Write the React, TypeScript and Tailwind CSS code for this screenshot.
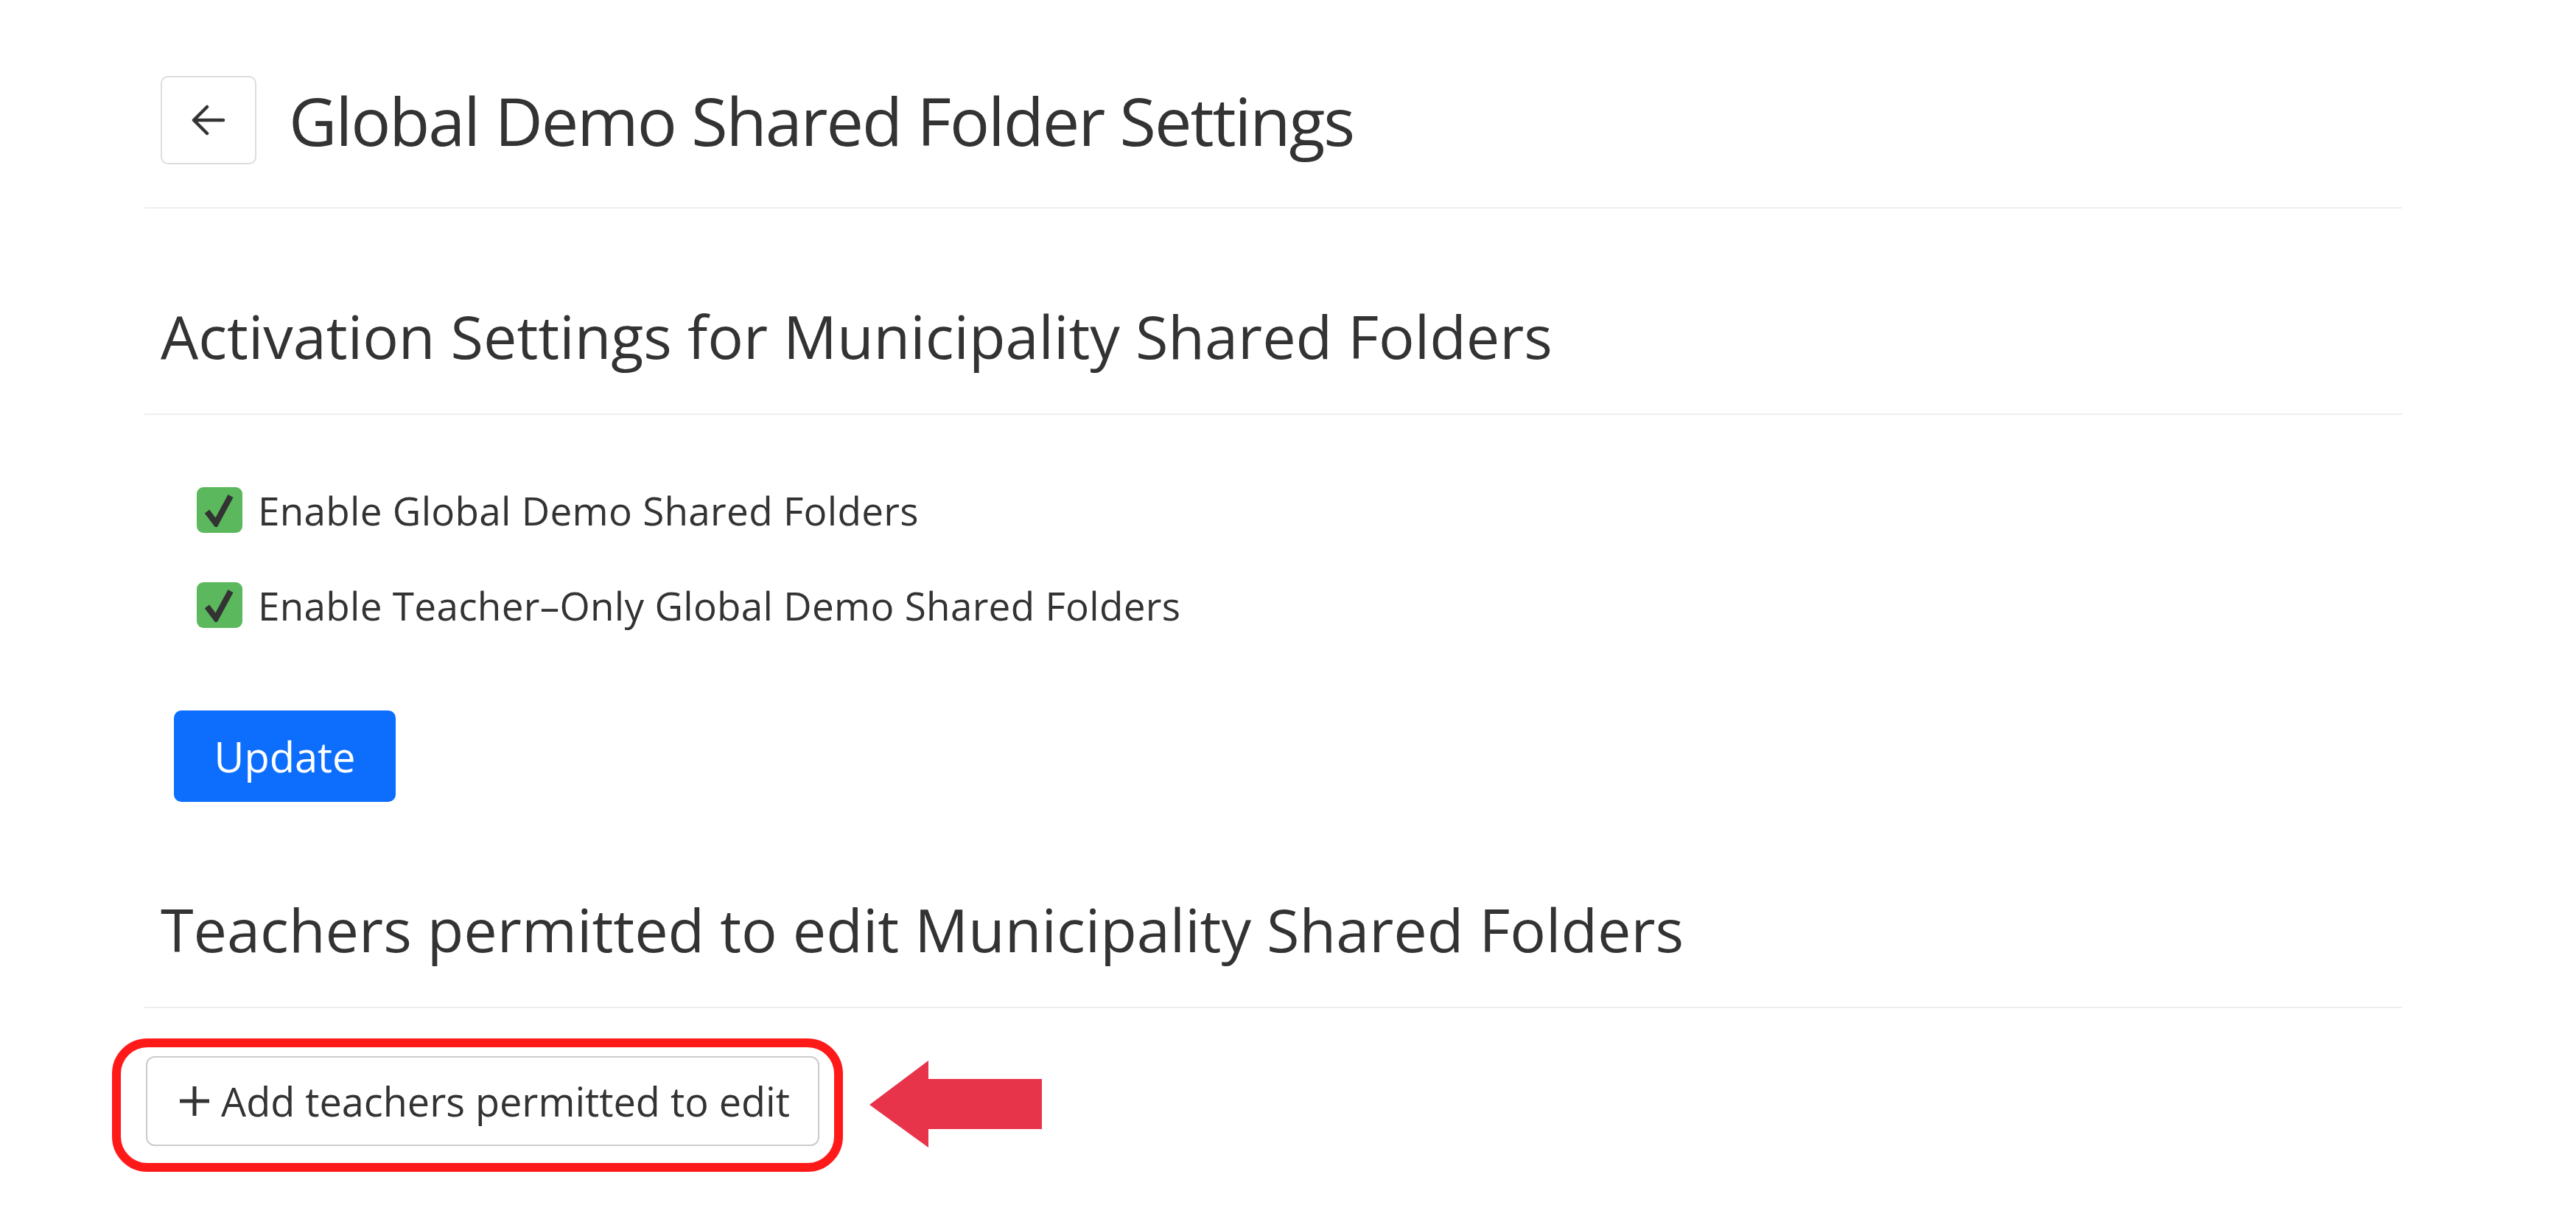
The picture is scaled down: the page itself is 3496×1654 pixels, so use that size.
const font = { fontFamily: '"Open Sans", "Noto Sans", sans-serif' };

const Check = () => (
    <span className="flex items-center justify-center w-[62px] h-[62px] rounded-[9px] bg-[#5cb85c] shrink-0">
        <svg width="40" height="46" viewBox="0 0 40 46">
            <path d="M3 25 L15 41 L35 4" fill="none" stroke="#333333" strokeWidth="8" strokeLinejoin="miter" />
        </svg>
    </span>
);

const CheckRow = ({ label }: { label: string }) => (
    <label className="flex items-center gap-[21px] h-[62px]">
        <Check />
        <span className="text-[53px] leading-none text-[#333333] tracking-[0.3px]">{label}</span>
    </label>
);

const SectionTitle = ({ children }: { children: string }) => (
    <div className="border-b-2 border-[#eeeeee] pt-[132px] pb-[65px]">
        <h2 className="pl-[22px] text-[81px] leading-none font-normal text-[#333333]">{children}</h2>
    </div>
);

export default function App() {
    return (
        <div className="min-h-screen bg-white" style={font}>
            <div className="ml-[196px] w-[3064px]">
                <div className="flex items-center gap-[44px] pt-[103px] pb-[58px] pl-[22px] border-b-2 border-[#eeeeee]">
                    <button className="flex items-center justify-center w-[130px] h-[120px] rounded-[10px] border-2 border-[#dddddd] bg-white">
                        <svg width="48" height="42" viewBox="0 0 48 42">
                            <path d="M44 21 H5 M22 3 L4 21 L22 39" fill="none" stroke="#333333" strokeWidth="4.5" strokeLinecap="round" strokeLinejoin="round" />
                        </svg>
                    </button>
                    <h1 className="text-[90px] leading-none font-normal text-[#333333] tracking-[-2px]">Global Demo Shared Folder Settings</h1>
                </div>

                <SectionTitle>Activation Settings for Municipality Shared Folders</SectionTitle>

                <div className="flex flex-col gap-[67px] pt-[98px] pl-[71px]">
                    <CheckRow label="Enable Global Demo Shared Folders" />
                    <CheckRow label="Enable Teacher–Only Global Demo Shared Folders" />
                </div>

                <div className="pt-[112px] pl-[40px]">
                    <button className="w-[301px] h-[124px] rounded-[10px] bg-[#0d6efd] text-white text-[56px] font-medium leading-none">Update</button>
                </div>

                <SectionTitle>Teachers permitted to edit Municipality Shared Folders</SectionTitle>

                <div className="flex items-start pt-[41px] -ml-[44px]">
                    <div className="pl-[34px] pr-[20px] pt-[12px] pb-[23px] border-[12px] border-[#ff1a1a] rounded-[48px]">
                        <button className="flex items-center gap-[14px] w-[914px] h-[122px] pl-[42px] rounded-[12px] border-2 border-[#cccccc] bg-white text-[54px] leading-none text-[#333333]">
                            <svg width="44" height="44" viewBox="0 0 44 44" className="shrink-0">
                                <path d="M22 2 V42 M2 22 H42" fill="none" stroke="#333333" strokeWidth="5" />
                            </svg>
                            <span>Add teachers permitted to edit</span>
                        </button>
                    </div>
                    <svg width="236" height="118" viewBox="0 0 236 118" className="ml-[36px] mt-[30px]">
                        <path d="M0 60 L80 0 V25 H234 V93 H80 V118 Z" fill="#e8344a" />
                    </svg>
                </div>
            </div>
        </div>
    );
}
